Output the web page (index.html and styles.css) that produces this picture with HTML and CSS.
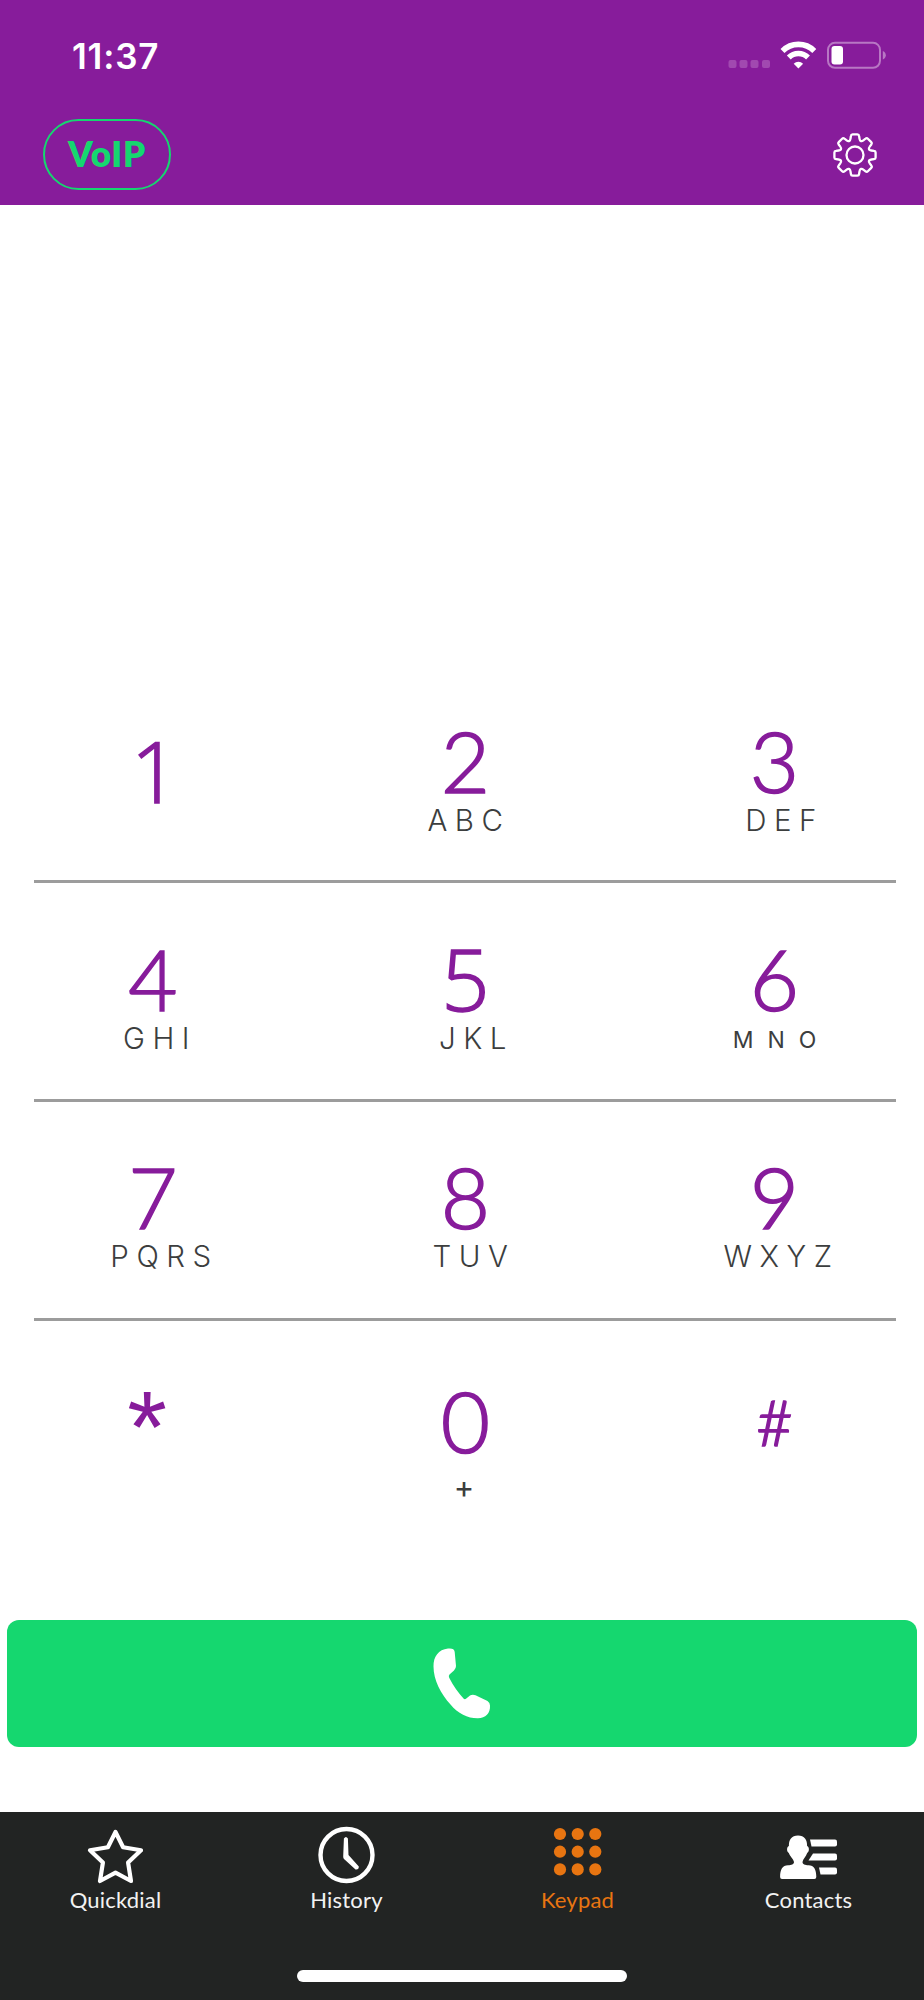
FILE: index.html
```
<!DOCTYPE html>
<html lang="en">

<head>
    <meta charset="UTF-8">
    <meta name="viewport" content="width=device-width, initial-scale=1.0">
    <title>Keypad</title>
    <link rel="stylesheet" href="styles.css">
</head>

<body>
    <header class="header">
        <div class="status-bar">
            <span class="time">11:37</span>
            <svg class="status-icons" width="160" height="30" viewBox="0 0 160 30">
                <g fill="#a149b0">
                    <rect x="2.5" y="21" width="8" height="8" rx="2" />
                    <rect x="13.5" y="21" width="8" height="8" rx="2" />
                    <rect x="24.5" y="21" width="8" height="8" rx="2" />
                    <rect x="36" y="21" width="8" height="8" rx="2" />
                </g>
                <g fill="none" stroke="#fff">
                    <path d="M56.500 12a22.500 22.500 0 0 1 31.800 0" stroke-width="5.600" />
                    <path d="M62.800 18.500a13.500 13.500 0 0 1 19.200 0" stroke-width="5.400" />
                </g>
                <path d="M72.400 29.500l-4.700-4.700a6.700 6.700 0 0 1 9.400 0z" fill="#fff" />
                <rect x="102" y="3.800" width="52" height="25" rx="7" fill="none" stroke="#b877c4" stroke-width="2" />
                <rect x="105.500" y="7" width="11.500" height="18.500" rx="3" fill="#fff" />
                <path d="M156.800 12c4 1.500 4 7 0 8.500z" fill="#b877c4" />
            </svg>
        </div>
        <div class="toolbar">
            <button class="voip">VoIP</button>
            <button class="settings">
                <svg width="44" height="44" viewBox="-22 -22 44 44" fill="none" stroke="#fff" stroke-width="2.300">
                    <defs>
                        <path id="tooth" stroke-linecap="round" d="M-5.820-14.040Q-4.700-14.500-4.500-16.300L-4.100-19Q-3.900-20.600-2.400-20.600H2.400Q3.900-20.600 4.100-19L4.500-16.300Q4.700-14.500 5.820-14.040" />
                    </defs>
                    <circle r="8.500" />
                    <use href="#tooth" />
                    <use href="#tooth" transform="rotate(45)" />
                    <use href="#tooth" transform="rotate(90)" />
                    <use href="#tooth" transform="rotate(135)" />
                    <use href="#tooth" transform="rotate(180)" />
                    <use href="#tooth" transform="rotate(225)" />
                    <use href="#tooth" transform="rotate(270)" />
                    <use href="#tooth" transform="rotate(315)" />
                </svg>
            </button>
        </div>
    </header>

    <main class="keypad">
        <div class="row row-1">
            <div class="key key-1"><span class="digit">1</span></div>
            <div class="key key-2"><span class="digit">2</span><span class="letters">ABC</span></div>
            <div class="key key-3"><span class="digit">3</span><span class="letters">DEF</span></div>
        </div>
        <div class="row row-2">
            <div class="key key-4"><span class="digit">4</span><span class="letters">GHI</span></div>
            <div class="key key-5"><span class="digit">5</span><span class="letters">JKL</span></div>
            <div class="key key-6"><span class="digit">6</span><span class="letters">MNO</span></div>
        </div>
        <div class="row row-3">
            <div class="key key-7"><span class="digit">7</span><span class="letters">PQRS</span></div>
            <div class="key key-8"><span class="digit">8</span><span class="letters">TUV</span></div>
            <div class="key key-9"><span class="digit">9</span><span class="letters">WXYZ</span></div>
        </div>
        <div class="row row-4">
            <div class="key key-star"><span class="digit">*</span></div>
            <div class="key key-0"><span class="digit">0</span><span class="letters">+</span></div>
            <div class="key key-hash"><span class="digit">#</span></div>
        </div>
    </main>

    <button class="call">
        <svg width="58" height="72" viewBox="0 0 58 72">
            <path fill="#fff" d="M15 0.500C19 0 21.500 1 21.700 4L23 18Q23 20.500 21 22.500L16.500 26.500Q15.300 28 16.200 29.800C20 37.500 25.500 45 30.500 50.500Q31.800 51.800 33.300 50.500L37 47.500Q39.500 46 42.500 47.200L54.500 53Q57 54.500 57 57.500C57.500 65.500 52.500 70 45 70.300C35 70.500 25 65.500 17.500 56.500C8 46 0.500 32 0.500 18.500C0.300 8.500 5.500 1.500 15 0.500Z" />
        </svg>
    </button>

    <footer class="footer">
        <nav class="tabs">
            <a class="tab">
                <svg width="60" height="60" viewBox="0.500 0 60 60">
                    <path d="M30 6L37.600 21.200L55.500 24.300L42.600 36.600L45.500 55L30 46.700L14.500 55L17.400 36.600L4.500 24.300L22.400 21.200Z" fill="none" stroke="#fff" stroke-width="4.200" stroke-linejoin="round" />
                </svg>
                <span>Quickdial</span>
            </a>
            <a class="tab">
                <svg width="60" height="60" viewBox="0 0 60 60">
                    <circle cx="29.500" cy="29" r="26" fill="none" stroke="#fff" stroke-width="4.400" />
                    <path d="M26.900 12.500Q29 9.500 30.900 12.500L31.500 29L41.800 40.500Q42 44 38.500 43.500L27 33Q26.200 32 26.200 30.500Z" fill="#fff" />
                </svg>
                <span>History</span>
            </a>
            <a class="tab active">
                <svg width="60" height="60" viewBox="0 0 60 60" fill="currentColor">
                    <circle cx="12" cy="8" r="6.100" />
                    <circle cx="29.700" cy="8" r="6.100" />
                    <circle cx="47.300" cy="8" r="6.100" />
                    <circle cx="12" cy="25.700" r="6.100" />
                    <circle cx="29.700" cy="25.700" r="6.100" />
                    <circle cx="47.300" cy="25.700" r="6.100" />
                    <circle cx="12" cy="43.400" r="6.100" />
                    <circle cx="29.700" cy="43.400" r="6.100" />
                    <circle cx="47.300" cy="43.400" r="6.100" />
                </svg>
                <span>Keypad</span>
            </a>
            <a class="tab">
                <svg width="60" height="60" viewBox="1.500 -0.500 60 60" fill="#fff">
                    <path d="M20.500 9C27 9 29.800 13.500 29.600 19.500C32 20.500 32 25 29.700 26.500C28.500 30 25.500 32.500 25 35.500C25 38 27.500 38.500 31 38.800C36.500 39 38.800 43 38.800 50.500Q38.800 52.500 36.800 52.500H4.500Q2.600 52.500 2.600 50.500C2.600 43 5 39 10.500 38.800C14 38.500 16.500 38 16.500 35.500C16 32.500 12.500 30 11.300 26.500C9 25 9 20.500 11.400 19.500C11.200 13.500 14 9 20.500 9Z" />
                    <path d="M32.500 13H57.500Q59.500 13 59.500 15V18Q59.500 20 57.500 20H34Z" />
                    <path d="M35.500 27H57.500Q59.500 27 59.500 29V32Q59.500 34 57.500 34H31Z" />
                    <path d="M41.500 41H57.500Q59.500 41 59.500 43V46Q59.500 48 57.500 48H43Z" />
                </svg>
                <span>Contacts</span>
            </a>
        </nav>
        <div class="home-indicator"></div>
    </footer>
</body>

</html>
```
FILE: styles.css
```
* {
    box-sizing: border-box;
}

body {
    display: flex;
    flex-direction: column;
    height: 2000px;
    margin: 0;
    background-color: #fff;
    font-family: Lato, sans-serif;
}

button {
    padding: 0;
    border: 0;
    background: none;
}

svg {
    display: block;
}

/* header */
.header {
    height: 205px;
    background-color: #871c9b;
}

.status-bar {
    display: flex;
    justify-content: space-between;
    height: 119px;
    padding: 39px 38px 0 72px;
}

.time {
    color: #fff;
    font-family: Inter, sans-serif;
    font-size: 35px;
    font-weight: 600;
    letter-spacing: 0.8px;
    line-height: 34px;
}

.toolbar {
    display: flex;
    justify-content: space-between;
    padding: 0 47.5px 0 43px;
}

.voip {
    width: 128px;
    height: 71px;
    padding-bottom: 4px;
    border: 2px solid #15d76f;
    border-radius: 36px;
    color: #15d76f;
    font-family: Lato, sans-serif;
    font-size: 35px;
    font-weight: 800;
    letter-spacing: 0.8px;
}

.settings {
    height: 44px;
    margin-top: 14px;
}

/* keypad */
.keypad {
    height: 956px;
    margin-top: 459px;
    padding: 0 28px 0 34px;
}

.row {
    display: grid;
    grid-template-columns: 238px 387px 231px;
    height: 219px;
    border-bottom: 3px solid #9c9c9c;
}

.row-1 {
    padding-top: 54px;
}

.row-2 {
    padding-top: 53px;
}

.row-3 {
    padding-top: 52px;
}

.row-4 {
    padding-top: 57px;
    border-bottom: 0;
}

.key {
    display: flex;
    flex-direction: column;
    align-items: center;
}

.digit {
    color: #871c9b;
    font-size: 85px;
    font-weight: 300;
    line-height: 85px;
    /* light weight is a bit too thin */
    -webkit-text-stroke: 1.6px #871c9b;
}

.letters {
    margin-top: 2px;
    color: #3c3e3e;
    font-family: Inter, "Liberation Sans", sans-serif;
    font-size: 29.5px;
    font-weight: 300;
    letter-spacing: 7.5px;
    line-height: 30px;
}

.key-1 {
    padding-top: 10px;
}

.key-1 .digit {
    margin-left: 4px;
    font-family: "Open Sans", sans-serif;
    font-size: 84px;
}

.key-2 .letters {
    margin-left: 7px;
}

.key-3 .letters {
    margin-left: 20px;
}

.key-4 .letters {
    margin-left: 14px;
}

.key-5 .digit {
    font-family: "Open Sans", sans-serif;
    font-size: 84px;
}

.key-5 .letters {
    margin-left: 22px;
}

.key-6 .letters {
    margin-left: 14px;
    font-size: 23px;
    font-weight: 400;
    letter-spacing: 14px;
    line-height: 35px;
}

.key-7 .letters {
    margin-left: 23px;
}

.key-8 .letters {
    margin-left: 17px;
}

.key-9 .letters {
    margin-left: 14px;
}

.key-0 .letters {
    margin-top: 9px;
    font-size: 31px;
    font-weight: 400;
    letter-spacing: 0;
    margin-right: 3px;
}

.key-star .digit {
    margin: 7px 12px 0 0;
    font-family: "Liberation Sans", sans-serif;
    font-size: 102px;
    -webkit-text-stroke: 0;
}

.key-hash .digit {
    margin-top: 1px;
    font-size: 63px;
}

/* call button */
.call {
    display: flex;
    flex-shrink: 0;
    height: 127px;
    margin: 0 7px;
    padding: 28px 0 0 426px;
    border-radius: 12px;
    background-color: #15d76f;
}

/* tab bar */
.footer {
    display: flex;
    flex-direction: column;
    justify-content: space-between;
    height: 188px;
    margin-top: auto;
    padding-bottom: 18px;
    background-color: #222423;
}

.tabs {
    display: grid;
    grid-template-columns: repeat(4, 1fr);
    padding-top: 14px;
}

.tab {
    display: flex;
    flex-direction: column;
    align-items: center;
    color: #f2f2f2;
    font-size: 22px;
    letter-spacing: 0.2px;
    line-height: 27px;
}

.tab.active {
    color: #e87511;
}

.home-indicator {
    align-self: center;
    width: 330px;
    height: 12px;
    border-radius: 6px;
    background-color: #fff;
}
```
